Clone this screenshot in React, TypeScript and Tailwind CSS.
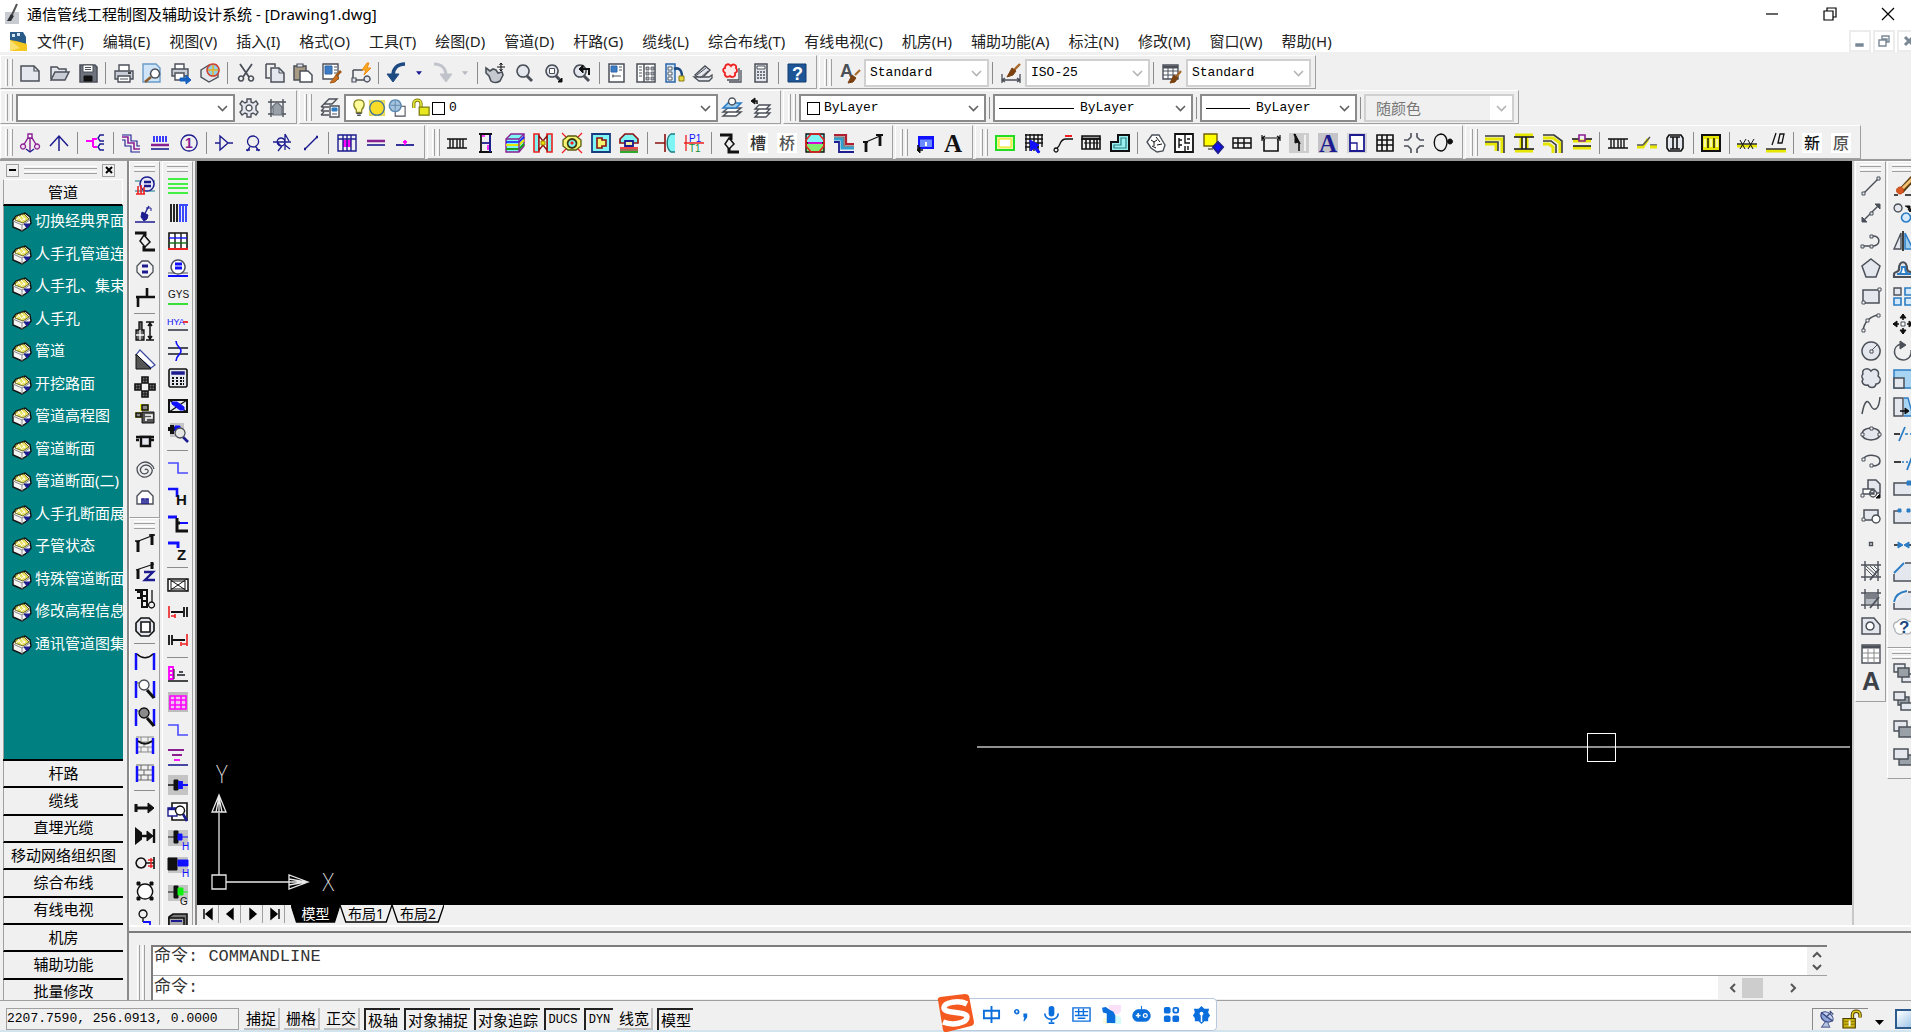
import React from "react";
import clsx from "clsx";

type Path = [d: string, stroke?: string, fill?: string, width?: number];
type Label = { t: string; x: number; y: number; s: number; c?: string; serif?: boolean };
type Mark = Path | Label;

const K = "#111111";
const S = "#4b5058";
const N = "#1c1c90";
const P = "#8a1f92";
const B = "#1010ff";
const Y = "#e6e600";
const M = "#ff00ff";
const C = "#7ff4f4";
const R = "#ee2020";
const L = "#2b7cc4";
const W = "#ffffff";
const G = "#22dd22";
const V = "#e4e7ee";
const O = "none";

const magnifier: Path[] = [
    ["M13 13l5 5", S, O, 3],
    ["M9 2a6 6 0 1 0 .1 0z", S, V, 1.5],
];
const post: Path[] = [["M1 19V2M19 19V2", B, O, 2.5]];

// every toolbar drawing lives on a 20x20 grid
const icons: Record<string, Mark[]> = {
    // standard
    new: [["M1 3h13l5 5v10H1z", S, V, 1.5], ["M14 3v5h5", S, O, 1.2]],
    open: [["M2 16V4h6l2 2h7v3", S, V, 1.5], ["M2 17L6 9h14l-4 8z", S, "#c9ced6", 1.5]],
    save: [["M2 2h15l2 2v15H2z", S, "#6d737c", 1.5], ["M5 2h10v7H5z", S, W], ["M6 13h8v5H6z", K, K], ["M7 4.500h6M7 6.500h6", S]],
    print: [["M5 8V2h10v6", S, W, 1.4], ["M1 8h18v8H1z", S, "#c9ced6", 1.4], ["M4 13h12v6H4z", S, W, 1.4], ["M6 16h8", S], ["M14 10h3", K, O, 1.5]],
    preview: [["M1 1h13l4 4v14H1z", "#6a9bc9", "#cfe4f6", 1.4], ["M9 14l-6 5", "#8a5a2a", O, 2.5], ["M13 6a4.500 4.500 0 1 0 .1 0z", S, W, 1.5]],
    publish: [["M4 6V1h9v5", S, W, 1.4], ["M1 6h16v7H1z", S, "#c9ced6", 1.4], ["M4 10h9v7H4z", S, W, 1.4], ["M9 15h6v-3l5 5-5 4v-3H9z", "#1560c0", "#1560c0"]],
    dwf: [["M1 7l8-5 9 5v7l-9 5-8-5z", S, V, 1.4], ["M13 1a6 6 0 1 0 .1 0z", "#d04030", "#8fd0e8", 1.5], ["M13 2v10M8 7h10", "#e8b020", O, 1.5]],
    cut: [["M4 1l9 13M16 1L7 14", S, O, 1.8], ["M5 13a2.500 2.500 0 1 0 .1 0zM15 13a2.500 2.500 0 1 0 .1 0z", S, O, 1.6]],
    copy: [["M1 1h9v3M1 1v14h4", S, O, 1.5], ["M6 5h8l5 5v9H6z", S, V, 1.5], ["M14 5v5h5", S]],
    paste: [["M1 3h12v14H1z", S, "#a99a84", 1.5], ["M4 1h6v3H4z", S, V, 1.2], ["M7 8h8l4 4v7H7z", S, W, 1.5]],
    matchprop: [["M1 1h15v15H1z", S, W, 1.4], ["M3 3h7v8H3z", "#2c64a8", "#3d7cc4"], ["M12 4h3M12 7h3M12 10h3", S], ["M19 8l-5 5", "#a05a18", O, 2.5], ["M14 12l3 3-4 4-5 1z", "#a05a18", "#c87020"]],
    blockedit: [["M2 7h10M2 7v10h11", S, O, 1.5], ["M16 13a3 3 0 1 0 .1 0z", S, V, 1.4], ["M1 15h4v4H1z", S, V, 1.2], ["M16 0l-5 7h4l-2 5 7-7h-4l2-5z", "#f08a10", "#f9a820"]],
    undo: [["M18 1C10 1 6 6 6 12", "#1d4a80", O, 3.5], ["M0 11h12l-6 8z", "#1d4a80", "#1d4a80"]],
    redo: [["M2 1c8 0 12 5 12 11", "#c0c4ca", O, 3], ["M8 11h12l-6 8z", "#c0c4ca", "#c0c4ca"]],
    pan: [["M1 5l4 3 3-2 3 1 2 3 4-1 1 3-3 6c-3 2-7 2-9 0l-2-5-3-3z", S, "#c6cad0", 1.6], ["M16 0v8M12 4h8M14.500 2L16 0l1.500 2M14.500 6L16 8l1.500-2", K]],
    zoomrt: magnifier,
    zoomwin: [...magnifier, ["M6.500 5.500h5v5h-5z", S, W], ["M19 15v4h-4z", K, K]],
    zoomprev: [...magnifier, ["M18 12V6H9", K, O, 2], ["M12 2L8 6l4 4z", K, K]],
    props: [["M2 1h15v18H2z", S, W, 1.5], ["M4 3h6v6H4z", "#2c64a8", "#3d7cc4"], ["M12 4h3M12 7h3M5 13h9", S], ["M6 11.500v3", S]],
    center: [["M1 1h7v18H1zM8 1h11v18H8z", S, W, 1.5], ["M3 4h3M3 7h3M3 10h3M3 13h3", S], ["M10 4h3v3h-3zM15 4h3v3h-3zM10 9h3v3h-3zM15 9h3v3h-3zM10 14h3v3h-3zM15 14h3v3h-3z", S, "#a8adb6", 0.8]],
    toolpal: [["M1 1h9v18H1z", "#2c64a8", "#cfe4f6", 1.5], ["M3 4h4v3H3zM3 9h4v3H3zM3 14h4v3H3z", S, W, 0.9], ["M9 6c5-2 8 1 8 8", "#1d4a80", O, 2.5], ["M14 13h5v5h-5z", "#8a7a10", "#e8d840"]],
    sheetset: [["M2 12l10-9 5 4-9 9z", S, V, 1.4], ["M1 14h15l3-2v3l-3 3H6z", S, V, 1.3], ["M4 12l9-7M7 15l8-7", S]],
    markup: [["M5 17h12V5M7 19h12V7", S, O, 1.3], ["M4 2c3-2 4 0 5 1 2-3 6-1 5 2 2 3 1 4-1 5 1 4-3 5-5 3-3 2-6 0-5-3-3-2-2-5 0-5 0-1 0-2 1-3z", R, "#fde8e8", 1.8]],
    calc: [["M4 1h12v18H4z", S, V, 1.5], ["M6 3h8v3H6z", S, W], ["M6 9h2M9 9h2M12 9h2M6 12h2M9 12h2M12 12h2M6 15h2M9 15h2M12 15h2", S, O, 1.6]],
    help: [["M1 1h18v18H1z", "#123c70", "#1e5596", 1], { t: "?", x: 5, y: 17, s: 18, c: W }],
    // styles
    textstyle: [{ t: "A", x: 0, y: 14, s: 18, c: S }, ["M20 7l-5 5", "#a86a28", O, 2.2], ["M12 12l4 3-3 4-5 1z", "#7a4010", "#7a4010"]],
    dimstyle: [["M1 11v9M19 11v9M1 17h18M4 15l-3 2 3 2M16 15l3 2-3 2", S, O, 1.3], ["M19 1l-6 6", "#a86a28", O, 2.4], ["M11 5l4 3-3 4-6 2z", "#7a4010", "#7a4010"]],
    tablestyle: [["M1 2h15v14H1z", S, W, 1.4], ["M1 4h15", S, O, 3], ["M1 8h15M1 12h15M6 4v12M11 4v12", S], ["M19 8l-5 6", "#a86a28", O, 2.2], ["M12 12l4 3-3 4-5 1z", "#7a4010", "#7a4010"]],
    // workspaces, layers
    gear: [["M8 1h4v3l2 1 3-2 2 3-2 2v4l2 2-2 3-3-2-2 1v3H8v-3l-2-1-3 2-2-3 2-2V8L1 6l2-3 3 2 2-1z", S, V, 1.4], ["M10 7a3 3 0 1 0 .1 0z", S, W, 1.4]],
    myspace: [["M1 4h18M1 16h18M4 1v18M16 1v18", S, O, 1.4], ["M10 4l6 6h-1v7H6v-7H4z", "#6a7078", "#9aa0a8", 1.2]],
    layers: [["M4 6l5-5h8l-5 5zM1 9h8M1 9l3-3M1 13h8M1 13l3-3M1 17h8M1 17l3-3", S, O, 1.4], ["M10 8h9v11h-9z", S, W, 1.4], ["M12 10h5v3h-5z", L, L], ["M12 16h5", S]],
    layercur: [["M1 18l5-4h13l-5 4zM1 14l5-4h13l-5 4z", S, W, 1.4], ["M1 10l5-5h13l-5 5z", L, "#9ccbf0", 1.6], ["M10 0a3.500 3.500 0 1 0 .1 0z", S, W, 1.3]],
    layerprev: [["M4 19l4-4h11l-4 4zM4 15l4-4h11l-4 4zM4 11l4-4h11l-4 4z", S, W, 1.3], ["M1 3h5v3", K, O, 1.5], ["M4 0L0 3l4 3z", K, K]],
    // lines row
    scale: [["M10 5v13M3 13L8 5h4l5 8", P, O, 1.4], ["M3 11a2.500 2.500 0 1 0 .1 0zM17 11a2.500 2.500 0 1 0 .1 0z", P, "#f4dff4", 1.3], ["M8 1h4v4H8z", P, W, 1.4], ["M6 16l4 3 4-3", N, O, 1.3]],
    up: [["M10 18V3M1 13l9-10 9 10", N, O, 1.5]],
    branch: [["M1 8h7M8 5v9M8 14h4M8 6h4", M, O, 2], ["M19 2h-4l-2 3 2 3h4M19 11h-4l-2 3 2 3h4", N, O, 1.4]],
    stair: [["M1 4h6v6h6v6h6", P, O, 1.6], ["M1 7h3v6h6v6h9M1 2h9v6h6v5h3", N, O, 1.1]],
    comb: [["M4 3v6M7 3v6M10 3v6M13 3v6M16 3v6", B, O, 1.6], ["M1 12h18", P, O, 2.5], ["M1 16h18", N, O, 1.6]],
    one: [["M10 2a8 8 0 1 0 .1 0z", N, O, 1.3], { t: "1", x: 6, y: 15, s: 14, c: P }],
    tri: [["M6 3v14l8-7zM1 10h5M14 10h5", N, O, 1.4]],
    person: [["M10 3a5.500 5.500 0 1 0 .1 0zM4 18l3-4M16 18l-3-4M3 17h4M13 17h4", N, O, 1.3]],
    person2: [["M9 5a4 4 0 1 0 .1 0zM1 9h18M13 1v16M5 9l4 4M6 18l4-5M13 12l5 4M13 1l4 7", N, O, 1.3]],
    slash: [["M4 16L16 4", N, O, 1.4], ["M3 16h2M15 4h2", N, O, 2.5]],
    gridm: [["M6 7h8v7H6z", O, M], ["M1 2h18v16H1zM1 6h18M6 2v16M10 2v16M14 2v16", N, O, 1.4]],
    dbl: [["M1 8h18", P, O, 2.5], ["M1 12h18", N, O, 1.6]],
    tline: [["M1 12h18", N, O, 1.8], ["M10 7v5M8 9h4", M, O, 1.8]],
    // duct row
    rail: [["M0 6h20M0 15h20M3 6v9M6 6v9M10 6v9M13 6v9M16 6v9", K, O, 1.4]],
    ibar: [["M3 1h13M3 19h13M5 1v18", K, O, 1.8], ["M14 2v17", N, O, 2], ["M6 10h8", N, O, 1.8], ["M6 3h3M12 12v5", M, O, 1.6]],
    box3d: [["M1 6l5-5h13v12l-5 6H1z", P, C, 1.4], ["M1 9h13l5-5", B, O, 1.6], ["M1 12h13l5-5", Y, O, 2], ["M1 16h13l5-5", "#1aa01a", O, 2], ["M1 6h13l5-5M14 6v13", P, O, 1.3]],
    duct: [["M1 1h5v18H1zM14 1h5v18h-5z", R, C, 1.6], ["M6 3v14l4-5 4 5V3l-4 5z", "#8a1010", W, 1.4], ["M8 8h4v4H8z", "#a08000", Y]],
    target: [["M0 0l20 20M20 0L0 20", R, O, 1.2], ["M6 3h8l5 4v6l-5 4H6l-5-4V7z", "#5a5a10", "#f4f470", 1.3], ["M10 6a4.500 4.500 0 1 0 .1 0z", "#3a3a10", C, 1.8], ["M9 9h2v2H9z", R, R]],
    cyanbox: [["M1 1h18v18H1z", "#1a3a80", C, 1.8], ["M6 5h5v2h4v6h-4v2H6z", "#8a1010", "#f4f470", 1.6]],
    house: [["M6 1h8l5 5v4H1V6z", "#8a1010", C, 1.6], ["M6 8h8v5H6z", N, "#f4f4a0", 1.8], ["M1 15h18", R, O, 1.6], ["M1 17h18", "#7a3a10", O, 1.4], ["M1 19h18", "#1aa01a", O, 1.8]],
    cap: [["M0 10h10M10 1v18", "#8a1010", O, 1.6], ["M20 1h-4c-5 3-5 15 0 18h4z", O, C], ["M20 1h-4c-5 3-5 15 0 18h4", "#1a7a80", O, 1.4]],
    p1t1: [["M0 10h20M2 2v16", R, O, 1.3], { t: "P1", x: 5, y: 9, s: 10, c: B }, { t: "T1", x: 5, y: 19, s: 10, c: "#109030" }],
    pole: [["M1 2h11v5", K, O, 3], ["M10 5l5 6-5 5-4-5z", K, O, 1.5], ["M10 15v4h10", K, O, 3]],
    cao: [["M0 0h20v20H0z", O, W], { t: "槽", x: 2, y: 16, s: 16, c: "#333" }],
    qiao: [["M0 0h20v20H0z", O, W], { t: "桥", x: 2, y: 16, s: 16, c: "#555" }],
    hexa: [["M1 1h18v9H1z", K, C, 1.4], ["M1 10h18v9H1z", K, "#7fef6f", 1.4], ["M6 1h8l5 6v6l-5 6H6l-5-6V7z", R, O, 1.6], ["M3 10h14", M, O, 1.6]],
    pipes: [["M0 2h12v9h8", "#b02030", O, 2.2], ["M0 6h8v9h12", "#30a0d0", O, 3], ["M0 9h5v10h15", N, O, 1.8], ["M0 4h10v9h10", "#555", O, 1.2]],
    pole2: [["M3 19V9M17 13V2", K, O, 2.8], ["M0 9h5M13 2h7", K, O, 2.2], ["M3 9l14-6", K, O, 1.2]],
    window: [["M4 4h14v11H4z", B, "#6a8cff", 2], ["M4 5h14", B, O, 3], ["M8 17H3v-5", K, O, 1.5], ["M5 14l-3 3 3 3z", K, K], ["M11 9v4", W, O, 2]],
    bigA: [{ t: "A", x: 1, y: 19, s: 25, c: K, serif: true }],
    // survey row
    greenbox: [["M1 3h18v14H1z", G, "#f4f4a0", 2], ["M4 6h12v8H4z", Y, W]],
    gridcur: [["M2 1v17M6 1v17M10 1v17M14 1v17M18 1v13M1 2h18M1 6h18M1 10h18M1 14h14", K, O, 1.4], ["M6 7l9 5-3 2 4 5-2 1-4-5-3 3z", B, B]],
    hook: [["M19 3h-7", R, O, 2], ["M13 6c-7 0-5 7-9 9M13 6h7", K, O, 1.3], ["M3 15a2 2 0 1 0 .1 0z", K, O, 1.3]],
    rail2: [["M1 3h18v3H1z", K, "#999", 1.6], ["M1 6h18v10H1zM5 6v10M9 6v10M13 6v10M16 6v10", K, O, 1.6], ["M3 10h15", K]],
    poly: [["M1 18V9h7V2h11v16z", K, "#9af0f0", 2], ["M4 15v-3h7V5h5v10z", "#2a8080", O, 1.2]],
    face: [["M6 2l7 0 3 5 3 5-2 6-6 1-6-4-4-6z", S, W, 1.4], ["M5 7l3 2 3-2M11 12l5-1M6 13l4 2M10 4l4 5M8 9l0 4", K]],
    plan: [["M1 1h18v18H1z", K, W, 1.8], ["M11 1v9h5M11 19v-6M5 5v10M5 7h3M5 12h3M13 6h3M14 13v4", K, O, 1.4]],
    shapes: [["M1 1h13v12H1z", "#706000", "#ffff00", 1.4], ["M15 9l5 5-5 6-5-6z", N, B, 2], ["M5 16h5", K]],
    rows: [["M1 5h18v10H1zM1 10h18M6 5v10M12 5v10", K, O, 1.5]],
    dimbox: [["M3 7v11h14V7", K, O, 1.6], ["M1 5h18M1 2v6M19 2v6M4 3L1 5l3 2M16 3l3 2-3 2", K, O, 1.2]],
    arrowbox: [["M0 0h20v20H0z", O, "#cdcdcd"], ["M5 1l6 10M10 10v8", K, O, 1.6], ["M6 1l0 9 4-1z", K, K], ["M16 2v16", W, O, 1.4]],
    blueA: [["M0 0h20v20H0z", O, "#c4c4c8"], { t: "A", x: 1, y: 19, s: 25, c: N, serif: true }],
    bluebox: [["M0 0h20v20H0z", O, "#d4d4d8"], ["M3 2h14v16H3z", N, W, 1.8], ["M3 10h7v8", N, O, 1.3]],
    grid: [["M2 2h16v16H2zM2 7h16M2 12h16M7 2v16M12 2v16", K, O, 1.6]],
    cross: [["M7 0v4L4 7H0M13 0v4l3 3h4M7 20v-4l-3-3H0M13 20v-4l3-3h4", S, O, 1.6]],
    ballpt: [["M8 1c-9 1-9 16 0 17 4 0 6-5 6-9s-2-8-6-8z", K, O, 1.4], ["M17 6a2.500 2.500 0 1 0 .1 0z", K, K]],
    // yellow row
    y1: [["M0 6h17v14M0 11h11v7", Y, O, 3], ["M0 3h19v17M0 9h13v9", "#3a3a3a", O, 1.6]],
    y2: [["M1 2h18M1 18h18M7 5v10M13 5v10", Y, O, 3], ["M0 4h20M0 16h20M8 4v12M12 4v12", K, O, 1.5]],
    y3: [["M0 5h10l7 5v10M0 11h6l4 3v6", Y, O, 3], ["M0 2h11l8 6v12M0 8h8l5 4v8", "#3a3a3a", O, 1.6]],
    y4: [["M1 8h18M1 15h18", Y, O, 3], ["M0 6h7M13 6h7M1 13h18", K, O, 1.3], ["M7 2h6v6H7z", P, O, 1.6]],
    brk: [["M0 14h6l5-8", Y, O, 3], ["M6 12l7-8M0 12h6M13 12h7", "#555", O, 1.5], ["M13 14h7", Y, O, 3]],
    drum: [["M4 2h12l2 3v10l-2 3H4l-2-3V5z", K, V, 1.6], ["M8 4v12M12 4v12M5 4h10M5 16h10", K, O, 1.6]],
    ybox: [["M1 2h18v16H1z", K, Y, 2], ["M7 5v10M13 5v10", K, O, 1.4], ["M4 6v8M10 6v8M16 6v8", "#fbfba0", O, 2.5]],
    hash: [["M0 13h20", Y, O, 3], ["M0 11h20", K, O, 1.3], ["M3 16l6-10M3 7l5 9M11 16l6-10M11 7l5 9", K]],
    ten: [["M0 18h20", Y, O, 3], ["M0 16h20", K, O, 1.3], ["M6 12L10 0M12 10l2-9h4l-2 9z", K, O, 1.3]],
    xin: [["M0 0h20v20H0z", O, W], { t: "新", x: 2, y: 16, s: 16, c: K }],
    yuan: [["M0 0h20v20H0z", O, W], { t: "原", x: 2, y: 16, s: 16, c: "#555" }],
    // left column 1
    s1: [["M0 5h20M0 15h20", "#5aa0a8", O, 1.6], ["M12 1a7 7 0 1 0 .1 0z", N, "#e8e8f8", 1.4], ["M9 6h7M9 10h7", N, O, 2.4], ["M3 18v-8M6 18V9M9 18v-7M1 18h9", R, O, 1.6]],
    s2: [["M0 18h20", N, O, 1.5], ["M14 2l-5 9", N, O, 1.4], ["M7 8l6 3-1 4-3 2-3-4z", N, N], ["M11 4h5v3", N]],
    s3: [["M0 2h10v3", K, O, 3], ["M9 4l6 7-5 5-5-6z", K, O, 1.5], ["M9 15v4h11", K, O, 3]],
    s4: [["M7 2h6l5 5v6l-5 5H7l-5-5V7z", S, "#f4f4f4", 1.3], ["M7 7h6M7 13h6", N, O, 3]],
    s5: [["M1 10h19M3 10v10M12 1v9", K, O, 2.6]],
    s6: [["M4 1h3v8h2v10H1V9h3z", K, "#666", 1.3], ["M1 14h8M5 9v10", W, O, 1.3], ["M11 1h8M11 19h8M15 2v16M13 5l2-3 2 3M13 15l2 3 2-3", K, O, 1.5]],
    s7: [["M5 1l15 15-4 3L1 6z", "#3a4aa0", W, 1.2], ["M1 5l15 15H1z", K, "#555"]],
    s8: [["M7 0h6v6H7zM7 14h6v6H7zM0 7h6v6H0zM14 7h6v6h-6z", K, "#777", 1.6], ["M10 0v6M10 14v6M0 10h6M14 10h6M7 3h6M7 17h6M3 7v6M17 7v6", K]],
    s9: [["M5 0h9v7H5zM0 8h8v6H0z", O, "#f4f430"], ["M7 1h6v5H7zM1 9h5v4H1z", K, "#888", 1.5], ["M7 8h12v11H7z", K, "#555", 1], ["M10 11h7v3h-6v3", W, O, 1.6]],
    s10: [["M1 5h18M1 8h3M16 8h3", K, O, 2.4], ["M6 5h9v9H6z", K, V, 2.4]],
    s11: [["M10 10c1-2 4 0 3 2s-5 3-7 0 1-7 5-7 7 4 6 7-5 6-9 5-6-5-6-8 4-7 8-7 8 3 9 7", S, O, 1.3]],
    s12: [["M2 17v-8l5-5h6l5 5v8z", S, W, 1.4], ["M7 17v-5h2v5M11 17v-5h2v5", N, O, 1.6]],
    s13: [["M3 19V8M17 12V1", K, O, 3], ["M1 9l18-7", K, O, 1.3], ["M0 8h5M14 2h6", K, O, 1.6]],
    s14: [["M3 18V8M17 8V1", K, O, 3], ["M1 9l18-6", K, O, 1.3], ["M9 11h9l-8 8h10", N, O, 2.4]],
    s15: [["M0 1h13M2 3h4v6H2M7 2v16h5V2M7 7h5M7 12h5", K, O, 2], ["M17 1v12", K, O, 1.3], ["M16.500 13a3 3 0 1 0 .1 0z", K, O, 1.3]],
    s16: [["M6 1h8l5 5v8l-5 5H6l-5-5V6z", K, V, 1.6], ["M6 5h9v10H6z", K, W, 1.6]],
    s17: [...post, ["M2 3c5 5 11 5 16 0", K, O, 1.4]],
    s18: [...post, ["M2 4h4", S], ["M12 11l7 8", K, O, 3], ["M9 1a5 5 0 1 0 .1 0z", S, W, 1.4]],
    s19: [...post, ["M2 4h4", S], ["M12 11l7 8", K, O, 3], ["M9 1a5 5 0 1 0 .1 0z", K, "#8a8a8a", 1.4]],
    s20: [["M1 2h18M1 7h18M1 12h18M1 17h18M6 2v5M13 2v5M9 7v5M6 12v5M13 12v5", "#888"], ["M2 19V3M18 19V3", B, O, 2.5], ["M3 6c5 4 9 4 14 0", K, O, 1.8]],
    s21: [["M1 2h18M1 7h18M1 12h18M1 17h18M6 2v5M13 2v5M9 7v5M6 12v5M13 12v5", "#666"], ["M2 19V3M18 19V3", B, O, 2.5]],
    s22: [["M1 6v8M1 10h12", K, O, 3], ["M13 5l6 5-6 5z", K, K]],
    s23: [["M1 3l5 4v6l-5 4z", K, K, 2], ["M4 10h10M19 3v14", K, O, 2.4], ["M12 5l6 5-6 5z", K, K]],
    s24: [["M6 5a5 5 0 1 0 .1 0zM11 10h8M19 4v12", K, O, 1.6], ["M13 7h5M13 13h5M16 5v10", R, O, 1.4]],
    s25: [["M10 3a7.500 7.500 0 1 0 .1 0z", K, W, 1.4], ["M2 1h3v3H2zM15 1h3v3h-3zM2 16h3v3H2zM15 16h3v3h-3z", K, K]],
    s26: [["M8 1a4 4 0 1 0 .1 0zM8 9v4", K, O, 1.4], ["M8 13h7v5h4", B, O, 1.8]],
    // left column 2
    d1: [["M0 3h20M0 8h20M0 12h20M0 17h20", "#44ef44", O, 2]],
    d2: [["M3 1v18M6 1v18M9 1v18", K, O, 1.8], ["M11 2h9M12 2v17M15 2v17M18 2v17", "#3a4aff", O, 2]],
    d3: [["M1 2h18v16H1z", K, W, 1.6], ["M7 2v16M13 2v16", K, O, 1.4], ["M1 7h18", B, O, 1.4], ["M1 12h18", "#107010", O, 1.4], ["M0 18h20", R, O, 2]],
    d4: [["M0 15h20", S], ["M0 18h20", B, O, 2], ["M10 2a7 7 0 1 0 .1 0z", S, W, 1.4], ["M7 6h7M7 10h7", B, O, 2.8]],
    d5: [{ t: "GYS", x: 0, y: 12, s: 10, c: K }, ["M0 18h20", G, O, 1.8]],
    d6: [{ t: "HYA", x: -1, y: 12, s: 9, c: B }, ["M15 9h5", R, O, 1.8], ["M0 17h20", S, O, 1.8]],
    d7: [["M0 7h20M0 13h20", S, O, 1.8], ["M8 0c0 6 5 6 5 10s-5 4-5 10", B, O, 1.6]],
    d8: [["M2 1h16l1 1v16l-1 1H2l-1-1V2z", K, V, 1.6], ["M4 4h12v2H4z", N, N, 1.5], ["M4 10h2M8 10h2M12 10h2M15 10h1M4 13h2M8 13h2M12 13h2M15 13h1M4 16h2M8 16h2M12 16h2M15 16h1", K, O, 2]],
    d9: [["M1 4h18v12H1z", K, V, 2], ["M1 4l18 12M19 4L1 16", K, O, 1.3], ["M4 6h5l7 5v3h-4L4 8z", B, B]],
    d10: [["M2 0h14v14H2z", O, "#c4c4c4"], ["M0 6h7M4 2v9", K, O, 4], ["M7 3h5v5H7z", B, B], ["M15 14l5 5", N, O, 2.6], ["M12 5a5 5 0 1 0 .1 0z", S, "#e4e4e4", 1.3]],
    d11: [["M0 5h10v10h10", "#4a4aff", O, 1.6]],
    d12: [["M0 4h9v8", B, O, 2.6], { t: "H", x: 8, y: 20, s: 15, c: K }],
    d13: [["M0 4h9", B, O, 3], ["M12 10h8", B, O, 2], ["M9 5v13h11M9 10h3", K, O, 3]],
    d14: [["M0 3h10v5", B, O, 3], { t: "Z", x: 9, y: 20, s: 15, c: K }],
    d15: [["M0 4h20v12H0z", K, W, 1.5], ["M1 4l18 12M19 4L1 16M3 6h14v8H3z", K]],
    d16: [["M3 10h12M16 5v10M19 5v10", K, O, 1.8], ["M1 4v12M7 12v4M3 14h4", R, O, 1.6]],
    d17: [["M4 10h13M1 5v10M4 5v10", K, O, 1.8], ["M19 4v12M13 12v4M14 14h5", R, O, 1.6]],
    d18: [["M1 2h4v12H1zM1 6h4M1 10h4", M, O, 1.8], ["M6 4v10", K], ["M0 16h20", K, O, 1.5], ["M9 10h8M11 7h4", S, O, 1.8]],
    d19: [["M0 0h20v20H0z", O, "#bdbdbd"], ["M2 4h16v13H2zM2 8h16M2 13h16M7 4v13M13 4v13", M, "#efc0ef", 1.6]],
    d20: [["M0 3h16M4 8h10", P, O, 1.8], ["M6 13h6", M, O, 1.8], ["M0 18h20", N, O, 1.6]],
    d21: [["M0 0h20v20H0z", O, "#c4c4c4"], ["M0 10h8", K, O, 1.5], ["M6 5h4v10H6z", K, K], ["M11 7h3v6h-3zM14 10h6", B, B, 1.8]],
    d22: [["M4 1h15v17H4z", K, W, 1.6], ["M0 6h9v8H0z", N, W, 1.4], ["M0 7h9", N, O, 2.4], ["M15 12l4 7", N, O, 2.6], ["M12 4a4.500 4.500 0 1 0 .1 0z", K, W, 1.3]],
    d23: [["M0 0h20v16H0z", O, "#c4c4c4"], ["M0 7h6M6 1h4v12H6z", K, K], ["M10 4h4v6h-4zM14 7h6", B, B], { t: "H", x: 14, y: 20, s: 10, c: B }],
    d24: [["M0 0h20v16H0z", O, "#c4c4c4"], ["M0 1h9v12H0z", K, K], ["M10 3h10v6H10z", B, B], { t: "H", x: 14, y: 20, s: 10, c: B }],
    d25: [["M0 0h20v16H0z", O, "#c4c4c4"], ["M0 7h6M6 1h4v12H6z", K, K], ["M10 3h5v7h-5zM15 7h5", "#10ef10", "#10ef10"], { t: "G", x: 12, y: 20, s: 10, c: K }],
    d26: [["M1 5l4-3h14v14H1z", K, "#777", 1.6], ["M1 6h15v13H1z", K, "#aaa", 1.5], ["M3 9h11", N, O, 2]],
    // draw
    line: [["M2 18L18 2", S, O, 1.4], ["M1 16h3v3H1zM16 1h3v3h-3z", S, V]],
    xline: [["M2 18L18 2", S, O, 1.4], ["M9 9h3v3H9z", S, V], ["M1 14v5h5zM14 1h5v5z", S, S]],
    pline: [["M2 15h9M11 5c9-1 9 10 1 10", S, O, 1.5], ["M0 14h3v3H0zM9 14h3v3H9zM9 4h3v3H9z", S, V]],
    polygon: [["M10 1l9 7-4 11H5L1 8z", S, V, 1.5]],
    rect: [["M2 4h16v13H2z", S, V, 1.5], ["M1 15h3v3H1zM17 2h3v3h-3z", S, W]],
    arc: [["M2 18C3 9 9 3 18 2", S, O, 1.5], ["M1 16h3v3H1zM5 6h3v3H5zM16 1h3v3h-3z", S, W]],
    circle: [["M10 1a9 9 0 1 0 .1 0z", S, V, 1.5], ["M10 10l6-6", S], ["M9 9h3v3H9z", S, W]],
    cloud: [["M10 3c4-4 9 0 7 5 4 3 2 8-2 8-1 5-7 4-8 1-5 1-7-3-5-6-2-2-1-4 0-5-2-5 5-7 8-3z", S, V, 1.5]],
    spline: [["M1 18C4 2 7 4 10 10s8 4 9-9", S, O, 1.5]],
    ellipse: [["M10 4c-12 1-12 11 0 12 12-1 12-11 0-12z", S, V, 1.5], ["M0 9h3v3H0zM9 3h3v3H9zM17 9h3v3h-3z", S, W]],
    earc: [["M2 8c5-6 17-4 17 2 0 4-4 5-8 5", S, O, 1.5], ["M1 7h3v3H1zM9 13h3v3H9z", S, W]],
    insert: [["M7 1h8l4 4v9H7z", S, V, 1.5], ["M2 10h11v5H2zM12 11a3.500 3.500 0 1 0 .1 0z", S, W, 1.3], ["M0 15h3v3H0z", S, W], ["M19 15v4h-4z", K, K]],
    block: [["M3 4h14v10H3z", S, V, 1.5], ["M15 9a4 4 0 1 0 .1 0z", S, W, 1.4], ["M1 12h3v3H1z", S, W]],
    point: [["M8.500 8.500h3v3h-3z", S, V, 1.4]],
    hatch: [["M4 0v20M17 0v20M0 4h20M0 16h20", S, O, 1.4], ["M5 8l7 7M5 5l11 10M9 5l7 7M13 5l3 3", S], ["M18 8L9 19", S, O, 1.8]],
    gradient: [["M4 0v20M17 0v20M0 4h20M0 16h20", S, O, 1.4], ["M5 5h11v5H5z", O, "#7a7f88"], ["M5 10h11v5H5z", O, "#b4b8c0"], ["M18 8L9 19", S, O, 1.8]],
    region: [["M1 2h12l6 7v9H1z", S, V, 1.5], ["M9 6a4 4 0 1 0 .1 0z", S, W, 1.5]],
    table: [["M1 1h18v18H1z", S, W, 1.4], ["M1 3h18", S, O, 3], ["M1 9h18M1 14h18M7 5v14M13 5v14", "#888"]],
    mtext: [{ t: "A", x: 1, y: 19, s: 25, c: "#3c4148" }],
    // modify
    erase: [["M1 19h4M12 19h8", K, O, 1.3], ["M8 15L20 2", "#5a3a10", O, 6], ["M9 13L20 2", "#f0c070", O, 3], ["M7 11a3.500 3.500 0 1 0 .1 0z", "#c04010", "#d85a20"]],
    mcopy: [["M5 1a4 4 0 1 0 .1 0z", S, V, 1.4], ["M13 10a4.500 4.500 0 1 0 .1 0z", L, "#d4eafc", 1.6], ["M12 3h5v4M15 6l2 3 2-3z", K, K]],
    mirror: [["M8 2v16H1z", S, V, 1.4], ["M10 0v20", K, O, 1.6], ["M12 2v16h8z", L, "#9ccbf0", 1.5]],
    offset: [["M1 18v-3c0-3 5-1 5-5 0-9 8-9 8 0 0 4 6 2 6 5v3z", S, V, 2.2], ["M4 15c4 0 5-2 5-7h3c0 5 1 7 7 7z", L, W, 1.8]],
    array: [["M1 2h7v7H1z", S, V, 1.4], ["M12 2h7v7h-7zM1 12h7v7H1zM12 12h7v7h-7z", L, "#d4eafc", 1.6]],
    move: [["M10 0v6M10 14v6M0 10h6M14 10h6", K, O, 1.6], ["M7 4l3-4 3 4zM7 16l3 4 3-4zM4 7l-4 3 4 3zM16 7l4 3-4 3z", K, K], ["M8 8h4v4H8z", S, W]],
    rotate: [["M8 3C-1 5-1 18 10 19c6 0 9-5 8-10", S, O, 1.5], ["M7 0l6 4-6 4z", S, S]],
    mscale: [["M1 1h20v18H1z", L, "#a8d4f4", 1.5], ["M1 9h10v10H1z", S, V, 1.5]],
    stretch: [["M1 1h9v18H1z", S, V, 1.5], ["M11 1h4l5 18h-9", L, "#a8d4f4", 1.4], ["M7 14h7", K, O, 1.6], ["M12 11l4 3-4 3z", K, K]],
    trim: [["M1 10h6", K, O, 1.6], ["M12 10h3M17 10h3", L, O, 1.6], ["M12 3L6 17", L, O, 1.8]],
    extend: [["M1 10h7", K, O, 1.6], ["M9 10h2M13 10h2", L, O, 1.6], ["M20 2l-6 16", L, O, 1.8]],
    breakpt: [["M1 4h20v12H1z", S, V, 1.5], ["M14 2h4v4h-4z", L, L]],
    mbreak: [["M5 4H1v12h20V4", S, V, 1.5], ["M5 2h3v3H5zM14 2h3v3h-3z", L, L]],
    join: [["M1 10h4M16 10h4", K, O, 1.4], ["M5 7l5 3-5 3zM16 7l-5 3 5 3z", L, L]],
    chamfer: [["M1 12v7h20V1h-9", S, V, 1.5], ["M1 11L11 1", L, O, 1.8]],
    fillet: [["M1 13v6h20V2h-6", S, V, 1.5], ["M1 12C2 5 7 2 14 1", L, O, 1.8]],
    explode: [["M4 5c3-4 8-4 11-1 5 0 6 5 4 8 0 5-5 6-8 4-4 3-10 0-9-4-3-2-1-7 2-7z", "#aeb3ba", W, 1.3], { t: "?", x: 6, y: 16, s: 17, c: "#1d4a80" }],
    front: [["M1 1h11v8H1zM9 11h11v8H9z", S, V, 1.4], ["M5 5h11v9H5z", S, "#9aa0a8", 1.5]],
    back: [["M5 6h11v8H5z", S, "#9aa0a8", 1.4], ["M1 1h11v8H1zM8 12h11v7H8z", S, V, 1.5]],
    above: [["M1 1h13v10H1z", S, V, 1.4], ["M6 7h15v10H6z", S, "#9aa0a8", 1.5]],
    under: [["M6 7h15v10H6z", S, "#9aa0a8", 1.4], ["M1 1h14v10H1z", S, V, 1.5]],
    // palette entry
    entry: [["M1 8L4 4l9-3 5 4 1 6-3 4-6 4-9-4z", K, "#f4f4f4", 1.4], ["M4 5l8-3 5 5-6 4-8-3z", "#6a6a20", "#e8e060"], ["M1 9l9 4v6M10 13l8-5", "#888"], ["M12 12h6l-3 4z", N, N], ["M6 4l3 4M9 3l4 5M4 8l4-3M13 6l-4 3", W]],
    // tray
    dish: [["M8 13l-4 6h9l-2-5", "#5a6a9a", "#b8c4e4", 1.2], ["M4 3c-3 7 5 13 12 9z", "#3a4a80", "#8fa4d8", 1.4], ["M4 3l12 9c3-3-4-13-12-9z", "#3a4a80", "#c4d0f0", 1.2], ["M9 8l6-6M13 1l4 4", "#3a4a80", O, 1.4]],
    lock: [["M11 10V5c0-5 8-5 8 0v3", "#4a3c00", O, 3.6], ["M11 10V5c0-5 8-5 8 0v3", "#e8d020", O, 1.6], ["M1 9h13v10H1z", "#4a3c00", "#c8b010", 1.2], ["M2 12h11M2 15h11", "#8a7800"], ["M8 11v6", W, O, 2]],
    // layer state
    bulb: [["M10 1c-7 0-7 7-3 11v3h6v-3c4-4 4-11-3-11z", "#8a8420", "#fdfb9a", 1.4], ["M7 16h6M8 18h4", S, O, 1.5]],
    sun: [["M1 1h18v18H1z", O, "#e8dc60"], ["M10 2a8 8 0 1 0 .1 0z", "#3a70a0", "#f8dc28", 1.4]],
    vpfreeze: [["M8 8h11v11H8z", S, W, 1.2], ["M8 1a6.500 6.500 0 1 0 .1 0z", "#5a88b0", "#a8c4dc", 1.5], ["M8 2v11M3 7h11", "#5a88b0"]],
    unlock: [["M2 10V5c0-5 8-5 8 0v4", "#7a7a10", O, 3.6], ["M2 10V5c0-5 8-5 8 0v4", "#f0f030", O, 1.6], ["M8 9h11v9H8z", "#7a7a10", "#e8e820", 1.4]],
};

const Icon = ({ name, className = "size-5" }: { name: string; className?: string }) => (
    <svg viewBox="0 0 20 20" className={clsx("shrink-0 overflow-visible", className)} aria-hidden="true">
        {icons[name].map((m, i) =>
            Array.isArray(m) ? (
                <path key={i} d={m[0]} stroke={m[1] ?? K} fill={m[2] ?? "none"} strokeWidth={m[3] ?? 1} />
            ) : (
                <text key={i} x={m.x} y={m.y} fontSize={m.s} fill={m.c} fontWeight={m.s > 12 && m.s !== 16 ? 700 : 500}
                    className={m.serif ? "font-['Liberation_Serif',serif]" : "font-['Liberation_Sans','Noto_Sans_CJK_SC',sans-serif]"}>
                    {m.t}
                </text>
            )
        )}
    </svg>
);

const Grip = () => <div className="mt-px mb-0.5 ml-1 mr-[3px] flex w-2 shrink-0 justify-between"><i className="w-[3px] border-l border-r border-white border-r-[#a0a0a0]" /><i className="w-[3px] border-l border-r border-white border-r-[#a0a0a0]" /></div>;
const VGrip = () => <div className="mx-1 mt-0.5 flex h-2 shrink-0 flex-col justify-between"><i className="h-[3px] border-y border-white border-b-[#a0a0a0]" /><i className="h-[3px] border-y border-white border-b-[#a0a0a0]" /></div>;
const Sep = () => <div className="flex w-[7px] shrink-0 justify-center py-1"><i className="w-px bg-[#8c8c8c]" /></div>;

const Tool = ({ name, fixed }: { name: string; fixed?: boolean }) => (
    <button aria-label={name} className={clsx("flex items-center justify-center", fixed ? "w-[29px] shrink-0" : "min-h-0 min-w-0 flex-1")}>
        <Icon name={name} />
    </button>
);

const Tools = ({ names }: { names: string }) => (
    <>
        {names.split(" ").map((n, i) => {
            if (n === "|") return <Sep key={i} />;
            if (n === "v" || n === "V") {
                return (
                    <button key={i} aria-label="history" className={clsx("flex w-[17px] shrink-0 items-center justify-center", n === "v" ? "text-[#1c1c90]" : "text-[#b8b8c4]")}>
                        <svg viewBox="0 0 8 5" className="h-1 w-1.5" fill="currentColor"><path d="M0 0h8L4 5z" /></svg>
                    </button>
                );
            }
            return <Tool key={i} name={n} />;
        })}
    </>
);

const Bar = ({ width, children }: { width: string; children: React.ReactNode }) => (
    <div className={clsx("flex h-[34px] shrink-0 border border-white border-b-[#a0a0a0] border-r-[#a0a0a0] pr-[5px] pt-0.5", width)}>
        <Grip />
        {children}
    </div>
);

const VBar = ({ names, height }: { names: string; height: string }) => (
    <div className={clsx("flex w-[31px] shrink-0 flex-col border border-white border-b-[#a0a0a0] border-r-[#a0a0a0] pb-1.5", height)}>
        <VGrip />
        {names.split(" ").map((n, i) =>
            n === "|" ? <div key={i} className="mx-1 flex h-[7px] shrink-0 items-center"><i className="h-px w-full bg-[#8c8c8c]" /></div> : <Tool key={i} name={n} />
        )}
    </div>
);

type ComboProps = { label: string; value: string; width: string; pad?: string; soft?: boolean; disabled?: boolean; children?: React.ReactNode };

const Combo = ({ label, value, width, pad = "pl-1", soft, disabled, children }: ComboProps) => (
    <div className={clsx("relative my-px flex h-[28px] shrink-0 items-center border-2 bg-white", soft ? "border-[#d0d0d0]" : "border-[#8a8a8a]", width)}>
        {children}
        <select aria-label={label} defaultValue={value} disabled={disabled}
            className={clsx("h-full w-full appearance-none outline-none disabled:opacity-100", pad, disabled ? "bg-[#f0f0f0] font-['Noto_Sans_CJK_SC',sans-serif] text-[15px] leading-5 text-[#777]" : "bg-transparent font-['Liberation_Mono',monospace] text-[13px] text-black")}>
            <option>{value}</option>
        </select>
        <span className={clsx("pointer-events-none absolute inset-y-0 right-0 flex w-[22px] items-center justify-center bg-white", soft ? "text-[#b4b4b4]" : "text-[#606060]")}>
            <svg viewBox="0 0 11 7" className="h-[7px] w-[11px]" fill="none" stroke="currentColor" strokeWidth="1.6"><path d="M1 1l4.500 4.500L10 1" /></svg>
        </span>
    </div>
);

const menus = ["文件(F)", "编辑(E)", "视图(V)", "插入(I)", "格式(O)", "工具(T)", "绘图(D)", "管道(D)", "杆路(G)", "缆线(L)", "综合布线(T)", "有线电视(C)", "机房(H)", "辅助功能(A)", "标注(N)", "修改(M)", "窗口(W)", "帮助(H)"];
const entries = ["切换经典界面", "人手孔管道连接", "人手孔、集束", "人手孔", "管道", "开挖路面", "管道高程图", "管道断面", "管道断面(二)", "人手孔断面展开", "子管状态", "特殊管道断面", "修改高程信息", "通讯管道图集"];
const groups = ["杆路", "缆线", "直埋光缆", "移动网络组织图", "综合布线", "有线电视", "机房", "辅助功能", "批量修改"];
const modes = [
    { name: "捕捉", on: false, w: "w-[36px]" },
    { name: "栅格", on: false, w: "w-[36px]" },
    { name: "正交", on: false, w: "w-[36px]" },
    { name: "极轴", on: true, w: "w-[36px]" },
    { name: "对象捕捉", on: true, w: "w-[66px]" },
    { name: "对象追踪", on: true, w: "w-[66px]" },
    { name: "DUCS", on: true, w: "w-[36px]" },
    { name: "DYN", on: true, w: "w-[29px]" },
    { name: "线宽", on: false, w: "w-[36px]" },
    { name: "模型", on: true, w: "w-[36px]" },
];
const navs = ["M3 2v10M11 2v10L5 7z", "M10 2v10L4 7z", "M5 2v10l6-5z", "M4 2v10l6-5zM12 2v10"];

const TitleBar = () => (
    <header className="flex h-[30px] shrink-0 items-center bg-white pb-0.5 pl-1">
        <svg viewBox="0 0 16 22" className="h-[22px] w-4" aria-hidden="true">
            <path d="M1 9h14v12H1z" fill="#c8ccd0" />
            <path d="M13 1L7 14" stroke="#555" strokeWidth="2" />
            <path d="M7 11l3 2-3 5H3z" fill="#2c3138" />
        </svg>
        <h1 className="ml-[7px] text-[15px] leading-5 text-black">通信管线工程制图及辅助设计系统 - [Drawing1.dwg]</h1>
        <div className="-mr-1.5 ml-auto flex text-black">
            {["M1 7h12", "M1 4h9v9H1zM4 4V1h9v9h-3", "M1 1l12 12M13 1L1 13"].map((d, i) => (
                <button key={d} aria-label={["minimize", "restore", "close"][i]} className="flex h-7 w-[58px] items-center justify-center">
                    <svg viewBox="0 0 14 14" className="size-3.5" fill="none" stroke="currentColor" strokeWidth="1.2"><path d={d} /></svg>
                </button>
            ))}
        </div>
    </header>
);

const MenuBar = () => (
    <nav className="flex h-[22px] shrink-0 items-center gap-[19px] bg-white pl-[9px] text-[15px] leading-5 text-[#222]">
        <svg viewBox="0 0 20 20" className="-mr-[11px] size-5 shrink-0" aria-hidden="true">
            <path d="M1 1h13l3 5v12H1z" fill="#2a5a88" />
            <path d="M3 3h3v3H3zM8 2h3v3H8z" fill="#cfe4f6" />
            <path d="M1 9l6 1 11 3v7H1z" fill="#f4c820" />
            <path d="M1 9l10 8-10 3z" fill="#fae070" />
        </svg>
        {menus.map((m) => <button key={m} className="-mt-px shrink-0 whitespace-nowrap">{m}</button>)}
        <div className="ml-auto flex shrink-0 gap-0.5 self-stretch overflow-hidden text-[#7a8896]">
            {["M2 9h7v2H2z", "M4 1h7v6H9V4H4zM1 5h7v6H1z", "M2 2l8 8M10 2l-8 8"].map((d, i) => (
                <button key={d} aria-label={["minimize drawing", "restore drawing", "close drawing"][i]} className={clsx("flex items-center border-2 border-[#ececec] bg-white", i === 2 ? "w-[14px] border-r-0 pl-1" : "w-[22px] justify-center")}>
                    <svg viewBox="0 0 12 12" className="size-3 shrink-0" fill={i === 0 ? "currentColor" : "none"} stroke="currentColor" strokeWidth={i === 2 ? 3 : 1.4}><path d={d} /></svg>
                </button>
            ))}
        </div>
    </nav>
);

const ToolbarRows = () => (
    <div className="flex shrink-0 flex-col gap-px border-b-2 border-[#9a9a9a] pt-[3px]">
        <div className="flex gap-0.5">
            <Bar width="w-[817px]">
                <Tools names="new open save | print preview publish dwf | cut copy paste matchprop blockedit | undo v redo V | pan zoomrt zoomwin zoomprev | props center toolpal sheetset markup calc | help" />
            </Bar>
            <Bar width="w-[497px]">
                <Tool name="textstyle" fixed />
                <Combo label="text style" value="Standard" width="w-[125px]" soft />
                <Sep />
                <Tool name="dimstyle" fixed />
                <Combo label="dimension style" value="ISO-25" width="w-[125px]" soft />
                <Sep />
                <Tool name="tablestyle" fixed />
                <Combo label="table style" value="Standard" width="w-[125px]" soft />
            </Bar>
        </div>
        <div className="flex gap-0.5">
            <Bar width="w-[297px]">
                <Combo label="workspace" value="" width="w-[219px]" />
                <Tools names="gear myspace" />
            </Bar>
            <Bar width="w-[482px]">
                <Tool name="layers" fixed />
                <Combo label="layer" value="0" width="w-[374px]">
                    <span className="flex shrink-0 items-center pl-1">
                        <Icon name="bulb" className="size-[18px]" />
                        <Icon name="sun" className="size-[18px]" />
                        <Icon name="vpfreeze" className="ml-0.5 size-[18px]" />
                        <Icon name="unlock" className="ml-1.5 size-[18px]" />
                        <i className="ml-0.5 size-[13px] border border-black" />
                    </span>
                </Combo>
                <Tools names="layercur layerprev" />
            </Bar>
            <Bar width="w-[736px]">
                <Combo label="color" value="ByLayer" width="w-[187px]">
                    <i className="ml-1.5 size-[13px] shrink-0 border border-black" />
                </Combo>
                <Sep />
                <Combo label="linetype" value="ByLayer" width="w-[200px]" pad="pl-1.5">
                    <i className="ml-1 h-px w-[75px] shrink-0 bg-black" />
                </Combo>
                <Sep />
                <Combo label="lineweight" value="ByLayer" width="w-[157px]" pad="pl-1.5">
                    <i className="ml-1 h-px w-[44px] shrink-0 bg-black" />
                </Combo>
                <Sep />
                <Combo label="plot style" value="随颜色" width="w-[150px]" pad="pl-2.5" soft disabled />
            </Bar>
        </div>
        <div className="flex gap-0.5">
            <Bar width="w-[425px]"><Tools names="scale up | branch | stair comb one | tri person person2 slash | gridm dbl tline" /></Bar>
            <Bar width="w-[466px]"><Tools names="rail ibar box3d duct target cyanbox house | cap p1t1 | pole cao qiao hexa pipes pole2" /></Bar>
            <Bar width="w-[78px]"><Tools names="window bigA" /></Bar>
            <Bar width="w-[488px]"><Tools names="greenbox gridcur hook rail2 poly | face plan shapes rows dimbox arrowbox blueA bluebox grid cross ballpt" /></Bar>
            <Bar width="w-[396px]"><Tools names="y1 y2 y3 y4 | rail brk drum | ybox | hash ten | xin yuan" /></Bar>
        </div>
    </div>
);

const Palette = () => (
    <aside className="flex w-[129px] shrink-0 flex-col border-r-2 border-[#8a8a8a] pl-[3px] pr-1">
        <div className="flex h-[18px] shrink-0 items-center gap-[5px] pl-[3px]">
            <button aria-label="collapse" className="flex size-[13px] items-center justify-center border border-[#a0a0a0]"><i className="h-0.5 w-[7px] bg-black" /></button>
            <div className="flex h-2 w-[73px] flex-col justify-between"><i className="h-[3px] border-y border-white border-b-[#a0a0a0]" /><i className="h-[3px] border-y border-white border-b-[#a0a0a0]" /></div>
            <button aria-label="close palette" className="flex size-[13px] items-center justify-center border border-[#a0a0a0]">
                <svg viewBox="0 0 8 8" className="size-2" stroke="#000" strokeWidth="2"><path d="M1 1l6 6M7 1L1 7" /></svg>
            </button>
        </div>
        <button className="h-[27px] shrink-0 border border-b-2 border-white border-b-black border-l-[#a0a0a0] text-[15px] leading-6">管道</button>
        <div className="min-h-0 flex-1 overflow-hidden border-l border-[#a0a0a0] bg-[#008080]">
            <ul className="grid h-[455px] auto-rows-fr">
                {entries.map((e) => (
                    <li key={e} className="flex">
                        <button className="flex items-center gap-[3px] whitespace-nowrap pb-1 pl-2 text-[15px] leading-5 text-white">
                            <Icon name="entry" className="mt-1 size-5" />
                            {e}
                        </button>
                    </li>
                ))}
            </ul>
        </div>
        <div className="h-[241px] shrink-0 overflow-hidden">
            <div className="grid h-[248px] auto-rows-fr border-t-2 border-black">
                {groups.map((g) => (
                    <button key={g} className="whitespace-nowrap border-b-2 border-l border-b-black border-l-[#a0a0a0] pb-0.5 text-[15px] leading-5">{g}</button>
                ))}
            </div>
        </div>
    </aside>
);

const Drawing = () => (
    <div className="relative min-h-0 flex-1 overflow-hidden bg-black">
        <svg viewBox="0 0 130 132" className="absolute bottom-3 left-3.5 h-[132px] w-[130px]" fill="none" stroke="#e8e8e8" strokeWidth="1.3" aria-hidden="true">
            <path d="M1 114h14v14H1zM8 114V52M15 121h63" />
            <path d="M8 34L1 51h14zM8 36L5 51M8 36v15M8 36l3 15M97 121l-19-7v14zM95 121l-17-3M95 121H78M95 121l-17 3" />
            <g fill="#e8e8e8" stroke="none" fontSize="24" className="font-['Noto_Sans_CJK_SC',sans-serif] font-thin">
                <text x="5" y="22">Y</text>
                <text x="111" y="130">X</text>
            </g>
        </svg>
        <i className="absolute bottom-[157px] left-[780px] right-0.5 h-0.5 bg-[#909090]" />
        <i className="absolute bottom-[143px] right-[236px] size-[29px] border border-white" />
    </div>
);

const LayoutTabs = () => (
    <div className="mb-0.5 flex h-[18px] shrink-0 items-stretch">
        {navs.map((d, i) => (
            <button key={d} aria-label={["first", "previous", "next", "last"][i]} className="flex w-[22px] items-center justify-center border-r border-[#a0a0a0]">
                <svg viewBox="0 0 14 14" className="size-3.5" stroke="#000" strokeWidth="1.4"><path d={d} /></svg>
            </button>
        ))}
        {["模型", "布局1", "布局2"].map((t, i) => (
            <button key={t} className={clsx("relative flex items-center justify-center text-[14px] leading-4", i === 0 ? "ml-1.5 w-[49px] text-white" : "w-[52px] text-black")}>
                <svg viewBox="0 0 54 18" preserveAspectRatio="none" className="absolute inset-0 h-full w-full" aria-hidden="true">
                    <path d="M0 0l6 17h42l6-17" fill={i === 0 ? "#000" : "#f0f0f0"} stroke="#000" strokeWidth="1.4" />
                </svg>
                <span className="relative">{t}</span>
            </button>
        ))}
    </div>
);

const Chevron = ({ d }: { d: string }) => (
    <svg viewBox="0 0 10 10" className="size-2.5" fill="none" stroke="#555" strokeWidth="2"><path d={d} /></svg>
);

const CommandLine = () => (
    <section className="flex h-[69px] shrink-0 border-t-2 border-[#7c7c7c] pl-2 pt-3">
        <div className="flex w-2 shrink-0 justify-between"><i className="w-[3px] border-l border-r border-white border-r-[#a0a0a0]" /><i className="w-[3px] border-l border-r border-white border-r-[#a0a0a0]" /></div>
        <div className="ml-1.5 mr-[84px] flex min-w-0 flex-1 flex-col border-l-2 border-[#7c7c7c] font-['Liberation_Mono','Noto_Sans_CJK_SC',monospace] text-[17px] leading-5 text-[#333]">
            <div className="flex h-[31px] shrink-0 border-b border-t-2 border-b-[#a0a0a0] border-t-[#7c7c7c]">
                <p className="flex-1 whitespace-pre bg-white pl-px">命令: COMMANDLINE</p>
                <div className="flex w-5 flex-col items-center justify-evenly">
                    <button aria-label="scroll up"><Chevron d="M1 7l4-4 4 4" /></button>
                    <button aria-label="scroll down"><Chevron d="M1 3l4 4 4-4" /></button>
                </div>
            </div>
            <div className="mr-[22px] flex h-[23px]">
                <label htmlFor="command" className="bg-white pl-px leading-6">命令:</label>
                <input id="command" className="min-w-0 flex-1 bg-white pl-2 outline-none" />
                <div className="flex w-[87px] items-center pl-2.5">
                    <button aria-label="scroll left"><Chevron d="M7 1L3 5l4 4" /></button>
                    <i className="ml-1 h-5 w-[21px] bg-[#cdcdcd]" />
                    <button aria-label="scroll right" className="ml-[25px]"><Chevron d="M3 1l4 4-4 4" /></button>
                </div>
            </div>
        </div>
    </section>
);

const StatusBar = () => (
    <footer className="relative flex h-[32px] shrink-0 items-center border-b-2 border-t border-b-[#d2e4ee] border-t-[#a0a0a0] pl-1.5 pt-1.5 text-[15px] leading-5">
        <output className="flex h-[22px] w-[233px] shrink-0 items-center border border-[#a0a0a0] font-['Liberation_Mono',monospace] text-[13px]">2207.7590, 256.0913, 0.0000</output>
        <div className="ml-[5px] flex gap-1">
            {modes.map((m) => (
                <button key={m.name} aria-pressed={m.on}
                    className={clsx("h-[22px] shrink-0 overflow-hidden whitespace-nowrap text-center", m.w,
                        m.on ? "border-l-2 border-t-2 border-[#222]" : "border-b-2 border-r-2 border-[#c0c0c0]",
                        /^[A-Z]/.test(m.name) && "font-['Liberation_Mono',monospace] text-[12px]")}>
                    <span className="-my-1 block leading-6">{m.name}</span>
                </button>
            ))}
        </div>
        <div className="ml-auto flex h-full w-[99px] shrink-0 items-center overflow-hidden">
            <div className="flex h-[22px] w-[56px] shrink-0 items-center gap-1.5 border-l border-t border-[#8a8a8a] pl-[5px]">
                <Icon name="dish" className="size-[18px]" />
                <Icon name="lock" className="size-[19px]" />
            </div>
            <svg viewBox="0 0 9 5" className="ml-[7px] mt-2 h-[5px] w-[9px] shrink-0"><path d="M0 0h9L4.500 5z" /></svg>
            <i className="ml-[11px] h-5 w-6 shrink-0 border-2 border-[#2c5a8c] bg-gradient-to-br from-white to-[#8fbce4]" />
        </div>
        <InputMethod />
    </footer>
);

// floating input method bar, sits over the command line and the status bar
const InputMethod = () => (
    <div className="absolute -top-[3px] left-[949px] flex h-[33px] w-[268px] items-center rounded-sm border border-[#b8c8e0] bg-white pl-[26px]">
        <svg viewBox="0 0 40 40" className="absolute -left-[15px] -top-[6px] size-10" aria-hidden="true">
            <path d="M3 7Q2 5 5 4L30 1q3 0 4 2l5 26q0 3-3 4L12 39q-3 1-4-2z" fill="#f45a20" />
            <path d="M32 11C24 7 9 9 9 15s23 3 23 9-14 9-24 5" stroke="#fff" strokeWidth="5.500" fill="none" />
        </svg>
        <div className="flex flex-1 text-[#0a6edc]">
            {[
                <path key="a" d="M2 6h16v8H2zM10 1v18" fill="none" stroke="currentColor" strokeWidth="2" />,
                <g key="b"><circle cx="5" cy="7" r="2" fill="none" stroke="currentColor" strokeWidth="1.800" /><path d="M12 9h4v4l-3 4h-1l1-4h-1z" fill="currentColor" /></g>,
                <g key="c"><rect x="7" y="1" width="6" height="11" rx="3" fill="currentColor" /><path d="M3 9c0 8 14 8 14 0M10 15v3M7 19h6" fill="none" stroke="currentColor" strokeWidth="1.800" /></g>,
                <path key="d" d="M1 3h18v14H1zM3 7h14M3 11h14M6 14h8M7 4v7M12 4v7" fill="none" stroke="currentColor" strokeWidth="1.500" />,
                <g key="e"><circle cx="14" cy="3" r="7" fill="#fbe0fa" /><circle cx="15" cy="17" r="6" fill="#d4fafa" /><circle cx="5" cy="17" r="4" fill="#f8fadc" /><path d="M0 3l4-1 4 3 4 2 2 4v8H5V9L1 8z" fill="currentColor" /></g>,
                <g key="f"><path d="M10 1v4M6 5h8c7 1 7 13-1 12H7C-1 18-1 6 6 5z" fill="currentColor" stroke="currentColor" /><path d="M4 11h5M6.500 8.500v5" stroke="#fff" strokeWidth="1.600" /><circle cx="14" cy="11" r="2" stroke="#fff" strokeWidth="1.300" fill="none" /></g>,
                <g key="g" fill="currentColor"><rect x="2" y="2" width="7" height="7" rx="2" /><rect x="2" y="11" width="7" height="7" rx="2" /><rect x="11" y="11" width="7" height="7" rx="2" /><rect x="12" y="3" width="5" height="5" rx="1.500" fill="none" stroke="currentColor" strokeWidth="2" /></g>,
                <g key="h"><path d="M10 1l3 3h5l-1 4 2 3-2 3v3h-4l-3 3-3-3H3v-3l-2-3 2-3-1-4h5z" fill="currentColor" /><path d="M10 9v9" stroke="#fff" strokeWidth="1.600" /><circle cx="10" cy="9" r="2" fill="#fff" /></g>,
            ].map((g, i) => (
                <button key={i} aria-label={["language", "punctuation", "voice", "keyboard", "skin", "games", "toolbox", "settings"][i]} className="flex flex-1 items-center justify-center">
                    <svg viewBox="0 0 20 20" className="size-[19px]">{g}</svg>
                </button>
            ))}
        </div>
    </div>
);

export default function App() {
    return (
        <div className="flex h-screen flex-col overflow-hidden bg-[#f0f0f0] font-['Noto_Sans','Noto_Sans_CJK_SC',sans-serif] text-black">
            <TitleBar />
            <MenuBar />
            <ToolbarRows />
            <div className="flex min-h-0 flex-1">
                <Palette />
                <div className="flex min-w-0 flex-1 flex-col">
                    <div className="mb-1 flex min-h-0 flex-1 overflow-hidden border-b-2 border-white">
                        <div className="flex flex-col overflow-hidden">
                            <VBar height="h-[357px]" names="s1 s2 s3 s4 s5 | s6 s7 s8 s9 s10 s11 s12" />
                            <VBar height="h-[422px]" names="s13 s14 s15 s16 | s17 s18 s19 s20 s21 | s22 s23 s24 s25 s26" />
                        </div>
                        <div className="ml-0.5 flex flex-col overflow-hidden">
                            <VBar height="h-[782px]" names="d1 d2 d3 d4 d5 d6 d7 d8 d9 d10 | d11 d12 d13 d14 | d15 d16 d17 | d18 d19 d11 d20 d21 d22 d23 d24 d25 d26" />
                        </div>
                        <div className="ml-0.5 flex min-w-0 flex-1 flex-col border-l-2 border-r-2 border-l-[#8a8a8a] border-r-[#c8c8c8]">
                            <Drawing />
                            <LayoutTabs />
                        </div>
                        <div className="ml-px flex w-[56px] shrink-0 items-start overflow-hidden">
                            <VBar height="h-[541px]" names="line xline pline polygon rect arc circle cloud spline ellipse earc insert block point hatch gradient region table mtext" />
                            <div className="ml-px">
                                <VBar height="h-[487px]" names="erase mcopy mirror offset array move rotate mscale stretch trim extend breakpt mbreak join chamfer fillet explode" />
                                <VBar height="h-[131px]" names="front back above under" />
                            </div>
                        </div>
                    </div>
                    <CommandLine />
                </div>
            </div>
            <StatusBar />
        </div>
    );
}
